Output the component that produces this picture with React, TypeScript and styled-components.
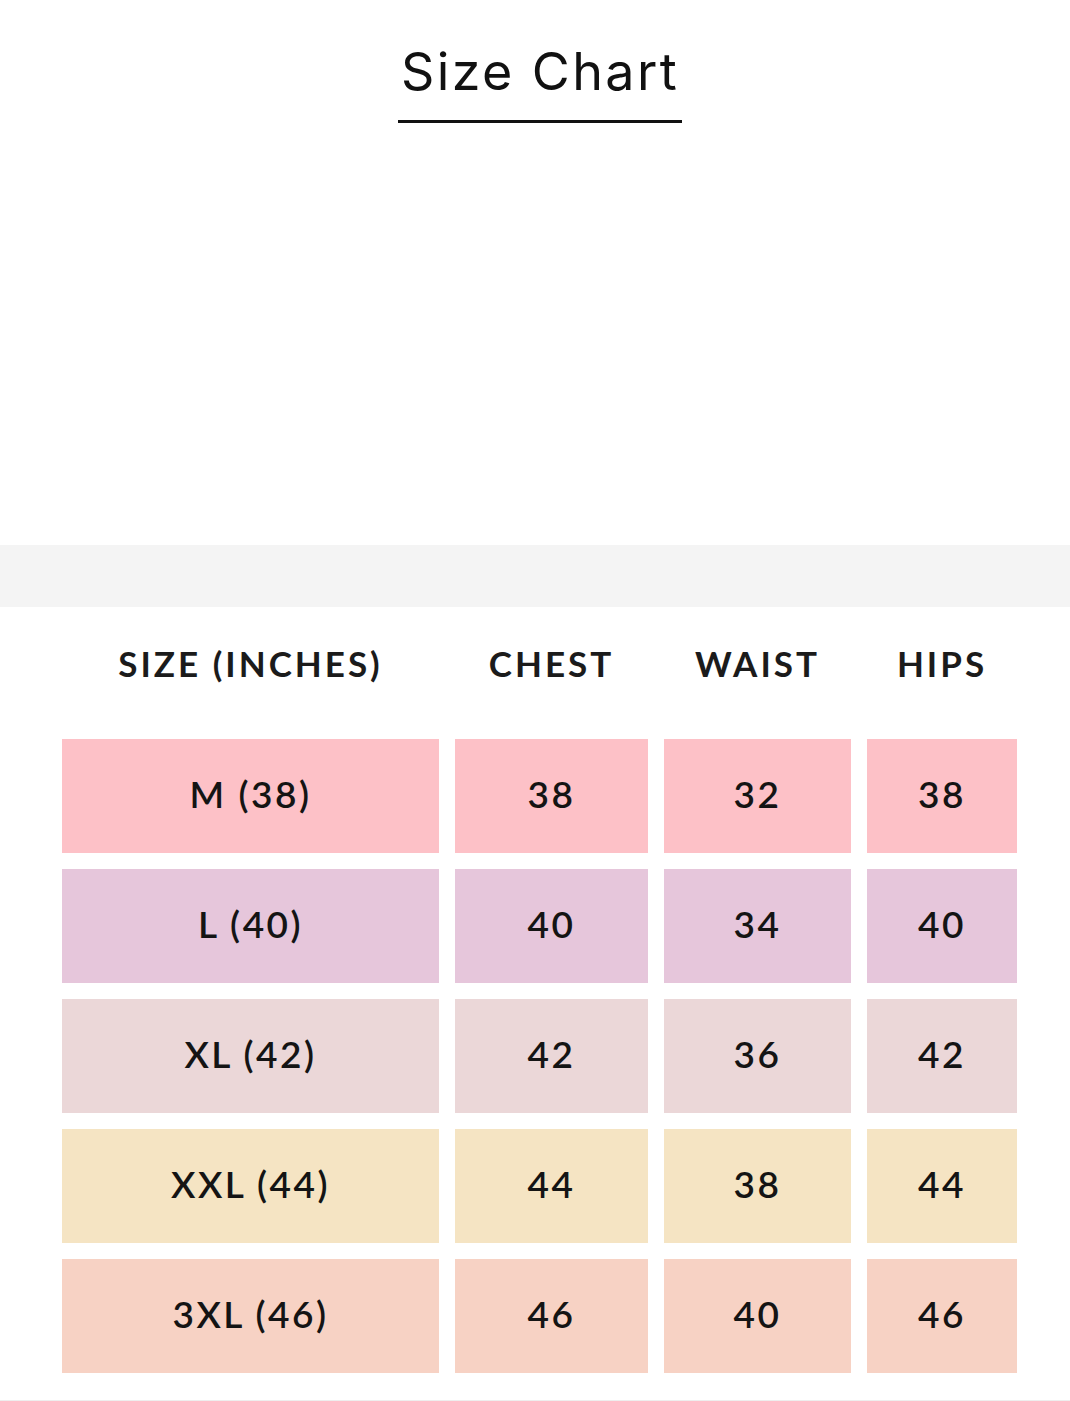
import React from "react"
import styled, { createGlobalStyle } from "styled-components"

const GlobalStyle = createGlobalStyle`
  html, body {
    margin: 0;
    padding: 0;
    background: #ffffff;
  }
  body {
    font-family: "Lato", "Liberation Sans", sans-serif;
    color: #161616;
  }
`

const rows = [
  { size: "M (38)", chest: 38, waist: 32, hips: 38, color: "#fdc1c7" },
  { size: "L (40)", chest: 40, waist: 34, hips: 40, color: "#e6c6db" },
  { size: "XL (42)", chest: 42, waist: 36, hips: 42, color: "#ebd7d8" },
  { size: "XXL (44)", chest: 44, waist: 38, hips: 44, color: "#f5e4c3" },
  { size: "3XL (46)", chest: 46, waist: 40, hips: 46, color: "#f7d2c4" },
]

export default () => {
  return (
    <Page>
      <GlobalStyle />
      <Header>
        <Title>Size Chart</Title>
      </Header>
      <Spacer />
      <GreyBand />
      <ChartSection>
        <Grid>
          <HeadCell>SIZE (INCHES)</HeadCell>
          <HeadCell>CHEST</HeadCell>
          <HeadCell>WAIST</HeadCell>
          <HeadCell>HIPS</HeadCell>
          {rows.map((row) => (
            <React.Fragment key={row.size}>
              <Cell bg={row.color}>{row.size}</Cell>
              <Cell bg={row.color}>{row.chest}</Cell>
              <Cell bg={row.color}>{row.waist}</Cell>
              <Cell bg={row.color}>{row.hips}</Cell>
            </React.Fragment>
          ))}
        </Grid>
      </ChartSection>
    </Page>
  )
}

const Page = styled.div`
  width: 1070px;
  height: 1401px;
  overflow: hidden;
  display: flex;
  flex-direction: column;
`

const Header = styled.div`
  display: flex;
  justify-content: center;
  padding-top: 44px;
  padding-left: 10px;
`

const Title = styled.h1`
  margin: 0;
  display: inline-block;
  font-family: "Inter", "Liberation Sans", sans-serif;
  font-weight: 400;
  font-size: 52px;
  line-height: 56px;
  letter-spacing: 2.4px;
  color: #111111;
  padding: 0 3px 20px;
  border-bottom: 3px solid #111111;
`

const Spacer = styled.div`
  height: 422px;
`

const GreyBand = styled.div`
  height: 62px;
  background: #f4f4f4;
`

const ChartSection = styled.div`
  flex: 1;
  padding: 0 53px 0 62px;
  border-bottom: 1px solid #eeeeee;
`

const Grid = styled.div`
  display: grid;
  grid-template-columns: 377px 193px 187px 150px;
  grid-template-rows: 116px repeat(5, 114px);
  column-gap: 16px;
  row-gap: 16px;
`

const HeadCell = styled.div`
  display: flex;
  align-items: center;
  justify-content: center;
  padding-bottom: 4px;
  font-weight: 700;
  font-size: 35px;
  letter-spacing: 3px;
  color: #1b1b1b;
`

const Cell = styled.div<{ bg: string }>`
  display: flex;
  align-items: center;
  justify-content: center;
  padding-bottom: 5px;
  background: ${(props) => props.bg};
  font-weight: 600;
  font-size: 37px;
  color: #141414;
  letter-spacing: 2.5px;
`
